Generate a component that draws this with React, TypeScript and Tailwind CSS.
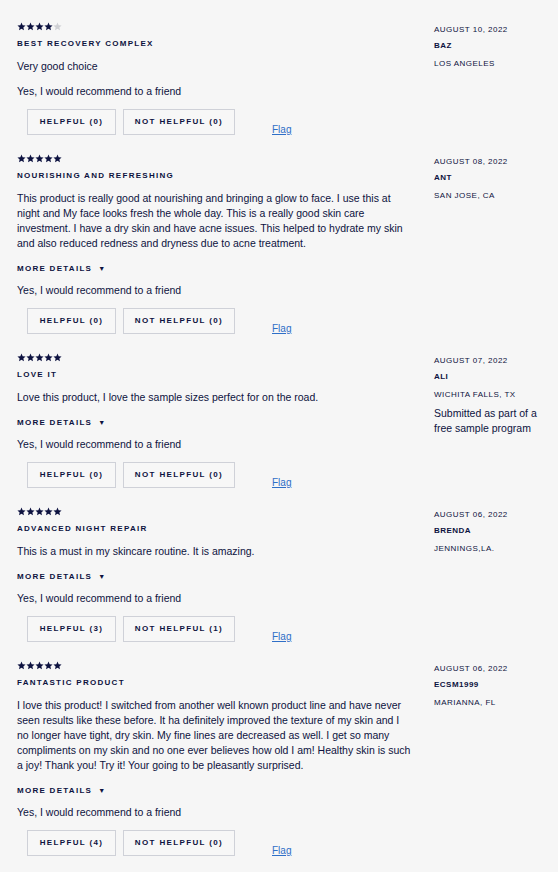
import React from "react";

type Review = {
  rating: number;
  title: string;
  body: string[];
  details: boolean;
  helpful: number;
  notHelpful: number;
  date: string;
  name: string;
  location: string;
  note?: string[];
};

const reviews: Review[] = [
  {
    rating: 4,
    title: "Best Recovery Complex",
    body: ["Very good choice"],
    details: false,
    helpful: 0,
    notHelpful: 0,
    date: "August 10, 2022",
    name: "BAZ",
    location: "LOS ANGELES",
  },
  {
    rating: 5,
    title: "Nourishing and refreshing",
    body: [
      "This product is really good at nourishing and bringing a glow to face. I use this at",
      "night and My face looks fresh the whole day. This is a really good skin care",
      "investment. I have a dry skin and have acne issues. This helped to hydrate my skin",
      "and also reduced redness and dryness due to acne treatment.",
    ],
    details: true,
    helpful: 0,
    notHelpful: 0,
    date: "August 08, 2022",
    name: "ANT",
    location: "SAN JOSE, CA",
  },
  {
    rating: 5,
    title: "Love it",
    body: ["Love this product, I love the sample sizes perfect for on the road."],
    details: true,
    helpful: 0,
    notHelpful: 0,
    date: "August 07, 2022",
    name: "ALI",
    location: "WICHITA FALLS, TX",
    note: ["Submitted as part of a", "free sample program"],
  },
  {
    rating: 5,
    title: "Advanced Night Repair",
    body: ["This is a must in my skincare routine. It is amazing."],
    details: true,
    helpful: 3,
    notHelpful: 1,
    date: "August 06, 2022",
    name: "BRENDA",
    location: "JENNINGS,LA.",
  },
  {
    rating: 5,
    title: "Fantastic product",
    body: [
      "I love this product! I switched from another well known product line and have never",
      "seen results like these before. It ha definitely improved the texture of my skin and I",
      "no longer have tight, dry skin. My fine lines are decreased as well. I get so many",
      "compliments on my skin and no one ever believes how old I am! Healthy skin is such",
      "a joy! Thank you! Try it! Your going to be pleasantly surprised.",
    ],
    details: true,
    helpful: 4,
    notHelpful: 0,
    date: "August 06, 2022",
    name: "ECSM1999",
    location: "MARIANNA, FL",
  },
];

function Star({ filled }: { filled: boolean }) {
  return (
    <svg width="9" height="9" viewBox="0 0 24 24" className={filled ? "fill-[#0d1240]" : "fill-[#cfd0d4]"}>
      <path d="M12 1.5l3.1 7.1 7.7.7-5.8 5.1 1.7 7.6L12 18l-6.7 4 1.7-7.6L1.2 9.3l7.7-.7z" />
    </svg>
  );
}

function ReviewItem({ r }: { r: Review }) {
  return (
    <div className="flex pt-[18px]">
      {/* left column */}
      <div className="w-[417px] shrink-0 pl-[17px]">
        <div className="flex h-[10px] items-center">
          {[0, 1, 2, 3, 4].map((i) => (
            <Star key={i} filled={i < r.rating} />
          ))}
        </div>
        <div className="mt-[7px] text-[8px] leading-[12px] font-bold uppercase tracking-[0.16em]">{r.title}</div>
        <div className="mt-[9px] text-[10.5px] leading-[15px] whitespace-nowrap">
          {r.body.map((l, i) => (
            <div key={i}>{l}</div>
          ))}
        </div>
        {r.details && (
          <div className="mt-[12px] flex items-center text-[8px] leading-[12px] font-bold tracking-[0.16em]">
            MORE DETAILS
            <span className="ml-[6px] text-[7px]">▼</span>
          </div>
        )}
        <div className={`${r.details ? "mt-[8px]" : "mt-[10px]"} text-[10.5px] leading-[15px]`}>
          Yes, I would recommend to a friend
        </div>
        <div className="mt-[10px] flex items-start pl-[10px]">
          <button className="h-[26px] w-[89px] border border-[#cfd1d8] bg-[#f7f7f7] text-[8px] font-bold tracking-[0.17em]">
            HELPFUL ({r.helpful})
          </button>
          <button className="ml-[7px] h-[26px] w-[112px] border border-[#cfd1d8] bg-[#f7f7f7] text-[8px] font-bold tracking-[0.17em]">
            NOT HELPFUL ({r.notHelpful})
          </button>
          <a className="ml-[37px] mt-[16px] h-[9px] text-[10px] leading-[10px] text-[#2f6fc7] underline">Flag</a>
        </div>
      </div>
      {/* right column */}
      <div className="pl-[17px] pt-[3px]">
        <div className="text-[8px] leading-[12px] uppercase tracking-[0.06em]">{r.date}</div>
        <div className="mt-[4px] text-[8px] leading-[12px] font-bold tracking-[0.06em]">{r.name}</div>
        <div className="mt-[6px] text-[8px] leading-[12px] tracking-[0.06em]">{r.location}</div>
        {r.note && (
          <div className="mt-[5px] text-[10.5px] leading-[15px]">
            {r.note.map((l, i) => (
              <div key={i}>{l}</div>
            ))}
          </div>
        )}
      </div>
    </div>
  );
}

export default function App() {
  return (
    <div className="min-h-screen w-[558px] bg-[#f6f6f6] pt-[3px] text-[#0d1240] font-['Liberation_Sans',Arial,sans-serif]">
      {reviews.map((r, i) => (
        <ReviewItem key={i} r={r} />
      ))}
    </div>
  );
}
